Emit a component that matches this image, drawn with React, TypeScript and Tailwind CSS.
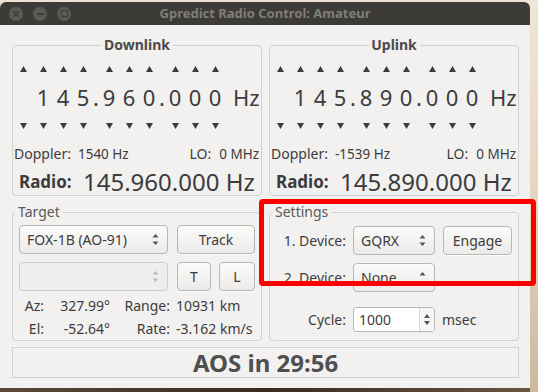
import React from "react";

const ink = "#3c3c3c";

const ArrowUp = () => (
  <svg width="7" height="6" viewBox="0 0 7 6">
    <path d="M3.5 0L7 6H0z" fill={ink} />
  </svg>
);

const ArrowDown = () => (
  <svg width="7" height="6" viewBox="0 0 7 6">
    <path d="M0 0H7L3.5 6z" fill={ink} />
  </svg>
);

// the little up/down glyph inside gtk combo boxes
const ComboArrows = ({ dim = false, onlyUp = false }: { dim?: boolean; onlyUp?: boolean }) => (
  <svg width="7" height="11" viewBox="0 0 7 11">
    <path d="M3.5 0L6.5 3.5H0.5z" fill={dim ? "#bdbab5" : "#555"} />
    {!onlyUp && <path d="M0.5 7.5H6.5L3.5 11z" fill={dim ? "#bdbab5" : "#555"} />}
  </svg>
);

const Frame = ({
  label,
  bold = false,
  center = false,
  className = "",
  children,
}: {
  label: string;
  bold?: boolean;
  center?: boolean;
  className?: string;
  children: React.ReactNode;
}) => (
  <div className={`relative border border-[#d3d0cb] rounded-[4px] ${className}`}>
    <div
      className={`absolute -top-[10px] h-[18px] leading-[18px] text-[14px] bg-[#f2f1f0] px-[3px] ${
        center ? "left-1/2 -translate-x-1/2" : "left-[2px]"
      } ${bold ? "font-bold text-[#4a4a4a]" : "text-[#5a5a5a]"}`}
    >
      {label}
    </div>
    {children}
  </div>
);

const Button = ({ children, className = "" }: { children: React.ReactNode; className?: string }) => (
  <div
    className={`flex items-center justify-center rounded-[4px] border border-[#bab7b2] bg-gradient-to-b from-[#fbfbfa] to-[#ecebe9] text-[14px] text-[#3c3c3c] shadow-[0_1px_0_rgba(255,255,255,0.8)] ${className}`}
  >
    {children}
  </div>
);

const Combo = ({
  text,
  disabled = false,
  onlyUp = false,
  className = "",
}: {
  text: string;
  disabled?: boolean;
  onlyUp?: boolean;
  className?: string;
}) => (
  <div
    className={`flex items-center justify-between rounded-[4px] border pl-[7px] pr-[8px] text-[14px] ${
      disabled
        ? "border-[#d0cdc8] bg-[#efeeec] text-[#9a9a9a]"
        : "border-[#bab7b2] bg-gradient-to-b from-[#fbfbfa] to-[#ecebe9] text-[#3c3c3c]"
    } ${className}`}
  >
    <span>{text}</span>
    <ComboArrows dim={disabled} onlyUp={onlyUp} />
  </div>
);

const digitsOf = (freq: string) => ["", ...freq.split("")];

const Tuner = ({ freq }: { freq: string }) => (
  <div className="flex items-start pt-[13px]">
    {digitsOf(freq).map((ch, i) =>
      ch === "." ? (
        <div key={i} className="w-[6px] flex flex-col">
          <div className="h-[20px]" />
          <div className="h-[36px] flex items-center justify-center text-[22px]">.</div>
        </div>
      ) : (
        <div key={i} className="w-[20px] flex flex-col items-center">
          <div className="h-[20px] flex items-center">
            <ArrowUp />
          </div>
          <div className="h-[36px] flex items-center text-[22px]">{ch}</div>
          <div className="h-[22px] flex items-center">
            <ArrowDown />
          </div>
        </div>
      )
    )}
    <div className="flex flex-col">
      <div className="h-[20px]" />
      <div className="h-[36px] flex items-center pl-[8px] text-[22px]">Hz</div>
    </div>
  </div>
);

const LinkPanel = ({
  label,
  freq,
  doppler,
  radio,
}: {
  label: string;
  freq: string;
  doppler: string;
  radio: string;
}) => (
  <Frame label={label} bold center className="h-[151px]">
    <Tuner freq={freq} />
    <div className="mt-[7px] h-[20px] flex items-center justify-between pl-[1px] pr-[2px]">
      <div className="flex items-baseline gap-[7px]">
        <span className="text-[14px]">Doppler:</span>
        <span className="text-[13.5px]">{doppler}</span>
      </div>
      <div className="flex items-baseline gap-[8px]">
        <span className="text-[14px]">LO:</span>
        <span className="text-[13.5px]">0 MHz</span>
      </div>
    </div>
    <div className="mt-[5px] h-[25px] flex items-center pl-[6px]">
      <span className="text-[17px] font-bold w-[64px]">Radio:</span>
      <span className="text-[24px]">{radio}</span>
    </div>
  </Frame>
);

export default function App() {
  return (
    <div className="w-[538px] h-[392px] flex bg-gradient-to-b from-[#ece3d6] via-[#e4d6c2] to-[#d9c6ad] font-['Noto_Sans',sans-serif] text-[#3c3c3c] overflow-hidden">
      <div className="w-[530px] flex flex-col pt-[2px]">
        <div className="h-[386px] w-[530px] flex flex-col">
          {/* title bar */}
          <div className="h-[23px] rounded-t-[6px] bg-[#3c3b37] flex items-center relative">
            <div className="flex items-center gap-[10px] pl-[9px]">
              <div className="w-[14px] h-[14px] rounded-full bg-[#5b5a56] flex items-center justify-center">
                <svg width="6" height="6" viewBox="0 0 6 6">
                  <path d="M0.5 0.5L5.5 5.5M5.5 0.5L0.5 5.5" stroke="#3c3b37" strokeWidth="1.4" />
                </svg>
              </div>
              <div className="w-[14px] h-[14px] rounded-full bg-[#5b5a56] flex items-center justify-center">
                <div className="w-[7px] h-[2px] bg-[#3c3b37]" />
              </div>
              <div className="w-[14px] h-[14px] rounded-full bg-[#5b5a56] flex items-center justify-center">
                <div className="w-[7px] h-[7px] border-[1.5px] border-[#3c3b37]" />
              </div>
            </div>
            <div className="absolute inset-0 flex items-center justify-center text-[13px] font-bold text-[#807e79]">
              Gpredict Radio Control: Amateur
            </div>
          </div>

          {/* body */}
          <div className="flex-1 bg-[#f2f1f0] pl-[12px] pr-[11px] pt-[20px] flex flex-col">
            <div className="grid grid-cols-[250px_250px] gap-x-[7px]">
              <LinkPanel label="Downlink" freq="145.960.000" doppler="1540 Hz" radio="145.960.000 Hz" />
              <LinkPanel label="Uplink" freq="145.890.000" doppler="-1539 Hz" radio="145.890.000 Hz" />
            </div>

            <div className="mt-[16px] grid grid-cols-[250px_250px] gap-x-[7px]">
              <Frame label="Target" className="h-[129px] pt-[12px] pl-[6px]">
                <div className="flex gap-[9px]">
                  <Combo text="FOX-1B (AO-91)" className="w-[149px] h-[29px]" />
                  <Button className="w-[78px] h-[29px]">Track</Button>
                </div>
                <div className="mt-[8px] flex gap-[9px]">
                  <Combo text="" disabled className="w-[149px] h-[29px]" />
                  <Button className="w-[34px] h-[29px]">T</Button>
                  <Button className="w-[36px] h-[29px] ml-[-1px]">L</Button>
                </div>
                <div className="mt-[3px] -ml-[6px] grid grid-cols-[31px_60px_54px_1fr] gap-x-[6px] text-[14px] whitespace-nowrap">
                  <div className="h-[23px] flex items-center justify-end">Az:</div>
                  <div className="h-[23px] flex items-center justify-end">327.99°</div>
                  <div className="h-[23px] flex items-center justify-end">Range:</div>
                  <div className="h-[23px] flex items-center">10931 km</div>
                  <div className="h-[23px] flex items-center justify-end">El:</div>
                  <div className="h-[23px] flex items-center justify-end">-52.64°</div>
                  <div className="h-[23px] flex items-center justify-end">Rate:</div>
                  <div className="h-[23px] flex items-center">-3.162 km/s</div>
                </div>
              </Frame>

              <Frame label="Settings" className="h-[129px] pt-[13px]">
                <div className="grid grid-cols-[76px_82px_auto] gap-x-[7px] items-center text-[14px]">
                  <div className="text-right">1. Device:</div>
                  <Combo text="GQRX" className="h-[29px]" />
                  <Button className="w-[69px] h-[29px] ml-[1px]">Engage</Button>

                  <div className="text-right mt-[8px]">2. Device:</div>
                  <Combo text="None" onlyUp className="h-[29px] mt-[8px]" />
                  <div />

                  <div className="text-right mt-[15px]">Cycle:</div>
                  <div className="mt-[15px] h-[25px] flex rounded-[3px] border border-[#bab7b2] bg-white">
                    <div className="flex-1 flex items-center pl-[5px]">1000</div>
                    <div className="w-[15px] border-l border-[#d6d3ce] bg-[#f6f6f5] flex flex-col items-center justify-center gap-[3px]">
                      <svg width="6" height="4" viewBox="0 0 6 4">
                        <path d="M3 0L6 4H0z" fill="#555" />
                      </svg>
                      <svg width="6" height="4" viewBox="0 0 6 4">
                        <path d="M0 0H6L3 4z" fill="#555" />
                      </svg>
                    </div>
                  </div>
                  <div className="mt-[15px]">msec</div>
                </div>
              </Frame>
            </div>

            <div className="mt-[6px] h-[31px] border border-[#d3d0cb] flex items-center justify-center text-[24px] font-bold text-[#4f4f4f]">
              AOS in 29:56
            </div>
          </div>
        </div>
        <div className="flex-1 bg-gradient-to-r from-[#5b4838] via-[#3a2b20] to-[#6a5442]" />
      </div>
      <div className="flex-1 bg-gradient-to-b from-[#efe6da] via-[#e6d5bf] to-[#cdb89b]" />

      {/* red annotation box */}
      <div className="absolute left-[259px] top-[199px] w-[277px] h-[87px] border-[5px] border-[#ff0000] rounded-[4px]" />
    </div>
  );
}
